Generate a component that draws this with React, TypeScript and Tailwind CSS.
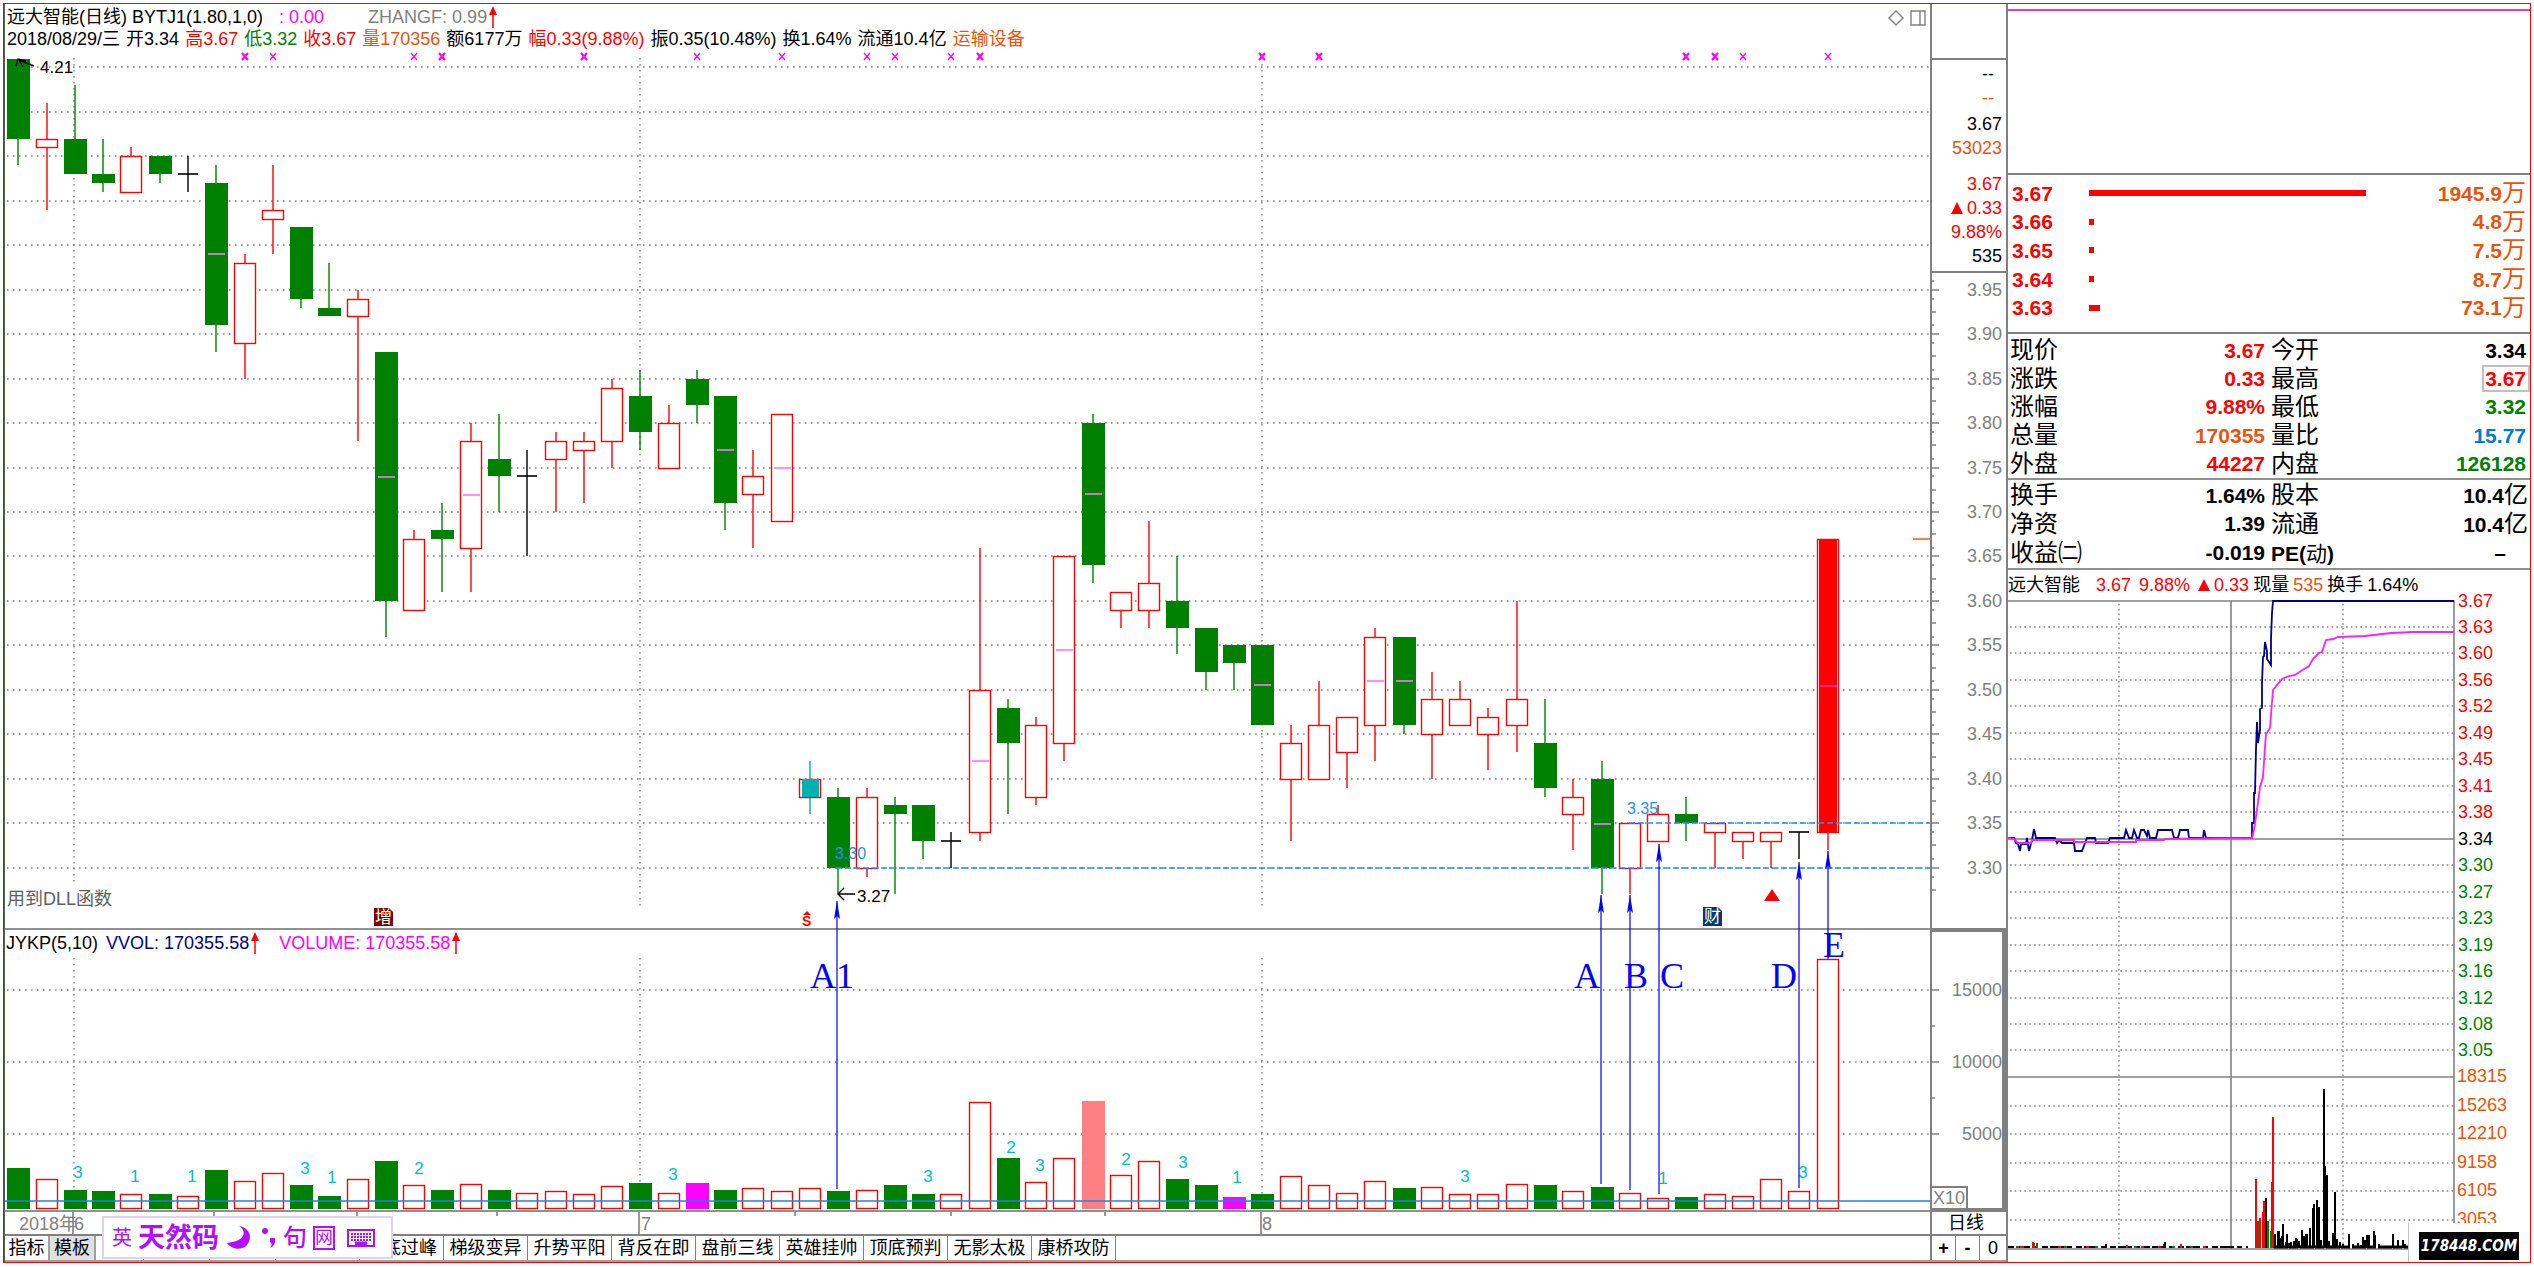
import { Fragment } from "react";

type Kind = "up" | "down" | "flat" | "gap" | "limit";
// kind, body top, body bottom, high, low, volume bar top (px), mid mark
type Candle = [Kind, number, number, number, number, number, boolean?];

const CANDLES: Candle[] = [
    ["down", 4.21, 4.12, 4.21, 4.09, 1168],
    ["up", 4.12, 4.11, 4.16, 4.04, 1179],
    ["down", 4.12, 4.08, 4.18, 4.08, 1190],
    ["down", 4.08, 4.07, 4.12, 4.06, 1191],
    ["up", 4.1, 4.06, 4.11, 4.06, 1194],
    ["down", 4.1, 4.08, 4.1, 4.07, 1194],
    ["flat", 4.08, 4.08, 4.1, 4.06, 1196],
    ["down", 4.07, 3.91, 4.09, 3.88, 1170, true],
    ["up", 3.98, 3.89, 3.99, 3.85, 1181],
    ["up", 4.04, 4.03, 4.09, 3.99, 1173],
    ["down", 4.02, 3.94, 4.02, 3.93, 1185],
    ["down", 3.93, 3.92, 3.98, 3.92, 1196],
    ["up", 3.94, 3.92, 3.95, 3.78, 1179],
    ["down", 3.88, 3.6, 3.88, 3.56, 1161, true],
    ["up", 3.67, 3.59, 3.68, 3.59, 1185],
    ["down", 3.68, 3.67, 3.71, 3.61, 1190],
    ["up", 3.78, 3.66, 3.8, 3.61, 1184, true],
    ["down", 3.76, 3.74, 3.81, 3.7, 1190],
    ["flat", 3.74, 3.74, 3.77, 3.65, 1193],
    ["up", 3.78, 3.76, 3.79, 3.7, 1191],
    ["up", 3.78, 3.77, 3.79, 3.71, 1194],
    ["up", 3.84, 3.78, 3.85, 3.75, 1186],
    ["down", 3.83, 3.79, 3.86, 3.77, 1183],
    ["up", 3.8, 3.75, 3.82, 3.75, 1193],
    ["down", 3.85, 3.82, 3.86, 3.8, 1183],
    ["down", 3.83, 3.71, 3.83, 3.68, 1190, true],
    ["up", 3.74, 3.72, 3.77, 3.66, 1188],
    ["up", 3.81, 3.69, 3.81, 3.69, 1191, true],
    ["gap", 3.4, 3.38, 3.42, 3.36, 1188],
    ["down", 3.38, 3.3, 3.39, 3.27, 1191],
    ["up", 3.38, 3.3, 3.39, 3.29, 1190],
    ["down", 3.37, 3.36, 3.38, 3.27, 1185],
    ["down", 3.37, 3.33, 3.37, 3.31, 1194],
    ["flat", 3.33, 3.33, 3.34, 3.3, 1194],
    ["up", 3.5, 3.34, 3.66, 3.33, 1102, true],
    ["down", 3.48, 3.44, 3.49, 3.36, 1158],
    ["up", 3.46, 3.38, 3.47, 3.37, 1182],
    ["up", 3.65, 3.44, 3.65, 3.42, 1158, true],
    ["down", 3.8, 3.64, 3.81, 3.62, 1101, true],
    ["up", 3.61, 3.59, 3.61, 3.57, 1175],
    ["up", 3.62, 3.59, 3.69, 3.57, 1161],
    ["down", 3.6, 3.57, 3.65, 3.54, 1179],
    ["down", 3.57, 3.52, 3.57, 3.5, 1185],
    ["down", 3.55, 3.53, 3.55, 3.5, 1197],
    ["down", 3.55, 3.46, 3.55, 3.46, 1194, true],
    ["up", 3.44, 3.4, 3.46, 3.33, 1176],
    ["up", 3.46, 3.4, 3.51, 3.4, 1185],
    ["up", 3.47, 3.43, 3.47, 3.39, 1193],
    ["up", 3.56, 3.46, 3.57, 3.42, 1181, true],
    ["down", 3.56, 3.46, 3.56, 3.45, 1188, true],
    ["up", 3.49, 3.45, 3.52, 3.4, 1187],
    ["up", 3.49, 3.46, 3.51, 3.46, 1194],
    ["up", 3.47, 3.45, 3.48, 3.41, 1194],
    ["up", 3.49, 3.46, 3.6, 3.43, 1184],
    ["down", 3.44, 3.39, 3.49, 3.38, 1185],
    ["up", 3.38, 3.36, 3.4, 3.32, 1191],
    ["down", 3.4, 3.3, 3.42, 3.27, 1187, true],
    ["up", 3.35, 3.3, 3.35, 3.27, 1193],
    ["up", 3.36, 3.33, 3.37, 3.33, 1198],
    ["down", 3.36, 3.35, 3.38, 3.33, 1197],
    ["up", 3.35, 3.34, 3.35, 3.3, 1194],
    ["up", 3.34, 3.33, 3.34, 3.31, 1196],
    ["up", 3.34, 3.33, 3.34, 3.3, 1179],
    ["flat", 3.34, 3.34, 3.34, 3.31, 1191],
    ["limit", 3.67, 3.34, 3.67, 3.32, 959, true],
];

const VOLUME_FILL: Record<number, string> = { 24: "#ff00ff", 38: "#ff8080", 43: "#ff00ff" };

const VOLUME_NOTES: [number, number, string][] = [
    [78, 1172, "3"], [135, 1176, "1"], [192, 1176, "1"], [305, 1168, "3"], [332, 1177, "1"],
    [419, 1168, "2"], [673, 1174, "3"], [928, 1176, "3"], [1011, 1147, "2"], [1040, 1165, "3"],
    [1126, 1159, "2"], [1183, 1162, "3"], [1237, 1177, "1"], [1465, 1176, "3"], [1663, 1178, "1"],
    [1803, 1172, "3"],
];

const CROSSES = [8, 9, 14, 15, 20, 24, 27, 30, 31, 33, 34, 44, 46, 59, 60, 61, 64];
const BOLD_CROSSES = [8, 15, 20, 34, 44, 46, 59, 60];
const MONTHS = [74, 640, 1262];

const priceY = (p: number) => Math.round(867.7 - (p - 3.3) * 889.2);
const candleX = (i: number) => Math.round(18.4 + i * 28.27);

const priceLines = Array.from({ length: 19 }, (_, i) => 3.3 + i * 0.05);

const INFO = [
    ["2018/08/29/三", "text-black"],
    ["开3.34", "text-black"],
    ["高3.67", "text-[#ff0000]"],
    ["低3.32", "text-[#008000]"],
    ["收3.67", "text-[#ff0000]"],
    ["量170356", "text-[#e8540c]"],
    ["额6177万", "text-black"],
    ["幅0.33(9.88%)", "text-[#ff0000]"],
    ["振0.35(10.48%)", "text-black"],
    ["换1.64%", "text-black"],
    ["流通10.4亿", "text-black"],
    ["运输设备", "text-[#e8540c]"],
];

const TABS = ["梯级变异", "升势平阳", "背反在即", "盘前三线", "英雄挂帅", "顶底预判", "无影太极", "康桥攻防"];

const LEVELS = [
    { price: "3.67", amount: "1945.9", width: "w-[277px]" },
    { price: "3.66", amount: "4.8", width: "w-[5px]" },
    { price: "3.65", amount: "7.5", width: "w-[5px]" },
    { price: "3.64", amount: "8.7", width: "w-[5px]" },
    { price: "3.63", amount: "73.1", width: "w-[11px]" },
];

const QUOTE = [
    ["现价", "3.67", "text-[#ff0000]", "今开", "3.34", "text-black"],
    ["涨跌", "0.33", "text-[#ff0000]", "最高", "3.67", "text-[#ff0000]"],
    ["涨幅", "9.88%", "text-[#ff0000]", "最低", "3.32", "text-[#008000]"],
    ["总量", "170355", "text-[#e8540c]", "量比", "15.77", "text-[#0078d7]"],
    ["外盘", "44227", "text-[#ff0000]", "内盘", "126128", "text-[#008000]"],
];

const FUNDAMENTALS = [
    ["换手", "1.64%", "text-black", "股本", "10.4亿", "text-black"],
    ["净资", "1.39", "text-black", "流通", "10.4亿", "text-black"],
    ["收益㈡", "-0.019", "text-black", "PE(动)", "–", "text-black"],
];

const MINI_LABELS = [
    "3.67", "3.63", "3.60", "3.56", "3.52", "3.49", "3.45", "3.41", "3.38", "3.34",
    "3.30", "3.27", "3.23", "3.19", "3.16", "3.12", "3.08", "3.05",
];
const MINI_VOLUMES = ["18315", "15263", "12210", "9158", "6105", "3053"];

const MINI_PRICE =
    "0,238 6,238 8,243 10,244 12,251 13,244 18,244 19,238 21,251 24,240 26,229 28,238 47,238 49,243 51,240 54,243 66,243 67,251 74,251 77,243 79,238 87,238 88,243 100,243 102,238 116,238 118,230 121,238 124,238 126,230 129,238 131,238 133,230 136,230 139,236 140,230 142,238 148,238 150,230 164,230 166,238 170,238 172,230 180,230 181,238 195,238 196,230 198,238 244,238 244,223 246,223 246,193 247,193 248,149 249,122 250,143 252,130 252,109 254,108 254,83 255,57 256,56 257,42 259,51 259,59 263,65 263,39 264,13 265,1 446,1";
const MINI_AVERAGE =
    "0,238 6,239 10,243 23,243 24,240 66,240 66,242 128,242 128,240 156,240 157,239 244,238 246,230 249,210 252,187 255,177 257,147 258,134 262,128 264,102 265,90 274,79 281,76 287,75 293,71 301,66 305,59 311,53 314,52 318,40 325,39 330,37 357,36 383,33 406,32 446,32";

// x, height, colour
const MINI_BARS: [number, number, string][] = [
    [24, 6, "#ff0000"], [25, 5, "#ff0000"], [28, 5, "#008000"], [97, 4, "#000"], [118, 3, "#ff0000"],
    [155, 4, "#000"], [156, 6, "#000"], [172, 4, "#ff0000"], [247, 69, "#ff0000"],
    [248, 27, "#ff0000"], [249, 27, "#804000"], [250, 27, "#804000"], [251, 30, "#ff0000"],
    [254, 36, "#ff0000"], [255, 47, "#ff0000"], [256, 47, "#ff0000"], [257, 50, "#000"],
    [259, 27, "#008000"], [262, 17, "#008000"], [263, 66, "#ff0000"], [264, 131, "#ff0000"],
    [266, 14, "#000"], [269, 17, "#000"], [270, 17, "#000"], [272, 10, "#000"], [273, 12, "#000"],
    [274, 24, "#000"], [277, 6, "#000"], [278, 14, "#000"], [280, 5, "#000"], [282, 6, "#000"],
    [285, 7, "#000"], [287, 10, "#000"], [288, 9, "#000"], [290, 7, "#000"], [293, 18, "#000"],
    [295, 12, "#000"], [297, 14, "#000"], [298, 14, "#000"], [301, 20, "#000"], [304, 40, "#000"],
    [305, 44, "#000"], [308, 48, "#000"], [310, 41, "#000"], [312, 8, "#000"], [315, 159, "#000"],
    [316, 82, "#000"], [318, 73, "#000"], [320, 7, "#000"], [324, 15, "#000"], [326, 56, "#000"],
    [328, 9, "#000"], [331, 6, "#000"], [334, 4, "#000"], [340, 14, "#000"], [344, 4, "#000"],
    [349, 5, "#000"], [352, 3, "#000"], [354, 11, "#000"], [356, 8, "#000"], [358, 13, "#000"],
    [360, 13, "#000"], [365, 17, "#000"], [366, 13, "#000"], [370, 4, "#000"], [384, 14, "#000"],
    [389, 8, "#000"], [394, 8, "#000"], [396, 4, "#000"],
];

const POINTERS = [
    { x: 837, top: 901, bottom: 1189, label: "A1", lx: 810, ly: 988 },
    { x: 1601, top: 895, bottom: 1184, label: "A", lx: 1574, ly: 988 },
    { x: 1630, top: 895, bottom: 1190, label: "B", lx: 1624, ly: 988 },
    { x: 1659, top: 844, bottom: 1194, label: "C", lx: 1660, ly: 988 },
    { x: 1799, top: 862, bottom: 1188, label: "D", lx: 1771, ly: 988 },
    { x: 1828, top: 851, bottom: 959, label: "E", lx: 1823, ly: 957 },
];

function CandleShape({ candle, index }: { candle: Candle; index: number }) {
    const [kind, top, bottom, high, low, , mid] = candle;
    const x = candleX(index);
    const yt = priceY(top);
    const yb = priceY(bottom);
    const yh = priceY(high);
    const yl = priceY(low);
    const color = kind === "down" ? "#008000" : kind === "flat" ? "#000000" : kind === "gap" ? "#00b0b0" : "#ff0000";

    return (
        <g>
            <path d={`M${x} ${yh}V${yt}M${x} ${yb}V${yl}`} stroke={color} strokeWidth="1.4" />
            {kind === "flat" && <path d={`M${x - 10} ${yt}H${x + 10}`} stroke={color} strokeWidth="1.6" />}
            {kind === "down" && <rect x={x - 11} y={yt} width="23" height={yb - yt} fill={color} />}
            {kind !== "down" && kind !== "flat" && (
                <rect x={x - 10.5} y={yt + 0.5} width="21" height={yb - yt} fill="#fff" stroke="#ff0000" strokeWidth="1.4" />
            )}
            {kind === "limit" && <rect x={x - 9} y={yt} width="18" height={yb - yt} fill="#ff0000" />}
            {kind === "gap" && <rect x={x - 8} y={yt} width="17" height={yb - yt} fill="#00b0b0" />}
            {mid && (
                <path
                    d={`M${x - 8} ${Math.round((yt + yb) / 2)}h17`}
                    stroke={kind === "down" ? "#c080c0" : kind === "limit" ? "#ff2090" : "#ff90ff"}
                    strokeWidth="2"
                />
            )}
        </g>
    );
}

function PriceChart() {
    return (
        <svg className="block h-full w-full overflow-visible" viewBox="5 50 1925 878" preserveAspectRatio="none">
            <g stroke="#808080" strokeWidth="1.4" strokeDasharray="1.6 4.4">
                {priceLines.map((p) => (
                    <path key={p} d={`M7 ${priceY(p)}H1930`} />
                ))}
                {MONTHS.map((x) => (
                    <path key={x} d={`M${x} 58V${x === 74 ? 884 : 906}`} />
                ))}
            </g>
            {CROSSES.map((i) => (
                <path
                    key={i}
                    d={`M${candleX(i) - 3} 53l6 7m0 -7l-6 7`}
                    stroke="#ff00ff"
                    strokeWidth={BOLD_CROSSES.includes(i) ? 2.2 : 1.3}
                />
            ))}
            {CANDLES.map((c, i) => (
                <CandleShape key={i} candle={c} index={i} />
            ))}
            <g stroke="#1e90ff" strokeWidth="1.6" strokeDasharray="6 3">
                <path d="M836 868H1930" />
                <path d="M1629 823H1930" />
            </g>
            <path d="M1913 539H1930" stroke="#f08050" strokeWidth="2" />
            <g fill="#1e90ff" fontSize="16">
                <text x="835" y="859">3.30</text>
                <text x="1627" y="814">3.35</text>
            </g>
            <path d="M34 66L19 60M16 66L18 59L26 61M23 67L19 60" stroke="#000" strokeWidth="1.4" fill="none" />
            <path d="M855 894H838M844 888L838 894L844 900" stroke="#000" strokeWidth="1.4" fill="none" />
            <g fontSize="17">
                <text x="40" y="73">4.21</text>
                <text x="857" y="902">3.27</text>
            </g>
            <text x="7" y="905" fontSize="18" fill="#606060">用到DLL函数</text>
            <path d="M374 908h15l4 4v14h-19z" fill="#800000" />
            <text x="375" y="923" fontSize="17" fill="#fff">增</text>
            <path d="M1703 907h15l4 4v15h-19z" fill="#003a70" />
            <text x="1704" y="922" fontSize="17" fill="#fff">财</text>
            <path d="M807 911l4 4h-8z" fill="#ff0000" />
            <text x="802" y="926" fontSize="14" fontWeight="bold" fill="#ff0000">S</text>
            <path d="M1772 889l8 12h-16z" fill="#ff0000" />
        </svg>
    );
}

function VolumeChart() {
    return (
        <svg className="block h-full w-full" viewBox="5 956 1925 254" preserveAspectRatio="none">
            <g stroke="#808080" strokeWidth="1.4" strokeDasharray="1.6 4.4">
                {[990, 1062, 1134].map((y) => (
                    <path key={y} d={`M7 ${y}H1930`} />
                ))}
                {MONTHS.map((x) => (
                    <path key={x} d={`M${x} 958V1208`} />
                ))}
            </g>
            {CANDLES.map((c, i) => {
                const x = candleX(i);
                const fill = VOLUME_FILL[i] ?? (c[0] === "down" ? "#008000" : null);
                return fill ? (
                    <rect key={i} x={x - 11} y={c[5]} width="23" height={1209 - c[5]} fill={fill} />
                ) : (
                    <rect key={i} x={x - 10.5} y={c[5] + 0.5} width="21" height={1208 - c[5]} fill="#fff" stroke="#ff0000" strokeWidth="1.4" />
                );
            })}
            <path d="M5 1201H1930" stroke="#1e80e8" strokeWidth="1.6" />
            <g fill="#00c0c0" fontSize="17" textAnchor="middle">
                {VOLUME_NOTES.map(([x, y, n]) => (
                    <text key={x} x={x} y={y + 6}>{n}</text>
                ))}
            </g>
        </svg>
    );
}

function Pointers() {
    return (
        <svg
            className="pointer-events-none absolute inset-0 h-full w-full"
            viewBox="5 4 1925 1208"
            preserveAspectRatio="none"
        >
            {POINTERS.map((p) => (
                <Fragment key={p.label}>
                    <path d={`M${p.x} ${p.top}V${p.bottom}`} stroke="#0000ff" strokeWidth="1.2" />
                    <path d={`M${p.x} ${p.top}l3 18l-3 -3l-3 3z`} fill="#0000ff" />
                    <text x={p.lx} y={p.ly} fontSize="36" fill="#0000ff" className="font-['Liberation_Serif',serif]">
                        {p.label}
                    </text>
                </Fragment>
            ))}
        </svg>
    );
}

function UpArrow() {
    return (
        <svg className="ml-0.5 h-[22px] w-2 shrink-0" viewBox="0 0 8 22">
            <path d="M4 2V22" stroke="#ff0000" strokeWidth="1.5" />
            <path d="M4 0l4 9H0z" fill="#ff0000" />
        </svg>
    );
}

function PriceAxis() {
    const labels = priceLines.filter((p) => p < 3.96);
    return (
        <svg className="block h-full w-full" viewBox="1932 273 74 655" preserveAspectRatio="none">
            {labels.map((p) => (
                <g key={p}>
                    <path
                        d={`M1932 ${priceY(p)}h7M1932 ${priceY(p + 0.01)}h2M1932 ${priceY(p - 0.01)}h2M1932 ${priceY(p - 0.025)}h4`}
                        stroke="#808080"
                        strokeWidth="1.6"
                    />
                    <text x="2002" y={priceY(p) + 6} fontSize="18" fill="#808080" textAnchor="end">
                        {p.toFixed(2)}
                    </text>
                </g>
            ))}
        </svg>
    );
}

function VolumeAxis() {
    return (
        <svg className="block h-full w-full" viewBox="1932 932 70 276" preserveAspectRatio="none">
            <path d="M1932 990h7M1932 1062h7M1932 1134h7M1932 1026h3M1932 1098h3" stroke="#808080" strokeWidth="1.6" />
            <g fontSize="18" fill="#808080" textAnchor="end">
                <text x="2002" y="996">15000</text>
                <text x="2002" y="1068">10000</text>
                <text x="2002" y="1140">5000</text>
            </g>
            <path d="M1932 1187h35v22" fill="none" stroke="#808080" strokeWidth="2" />
            <text x="1933" y="1204" fontSize="18" fill="#808080">X10</text>
        </svg>
    );
}

function QuoteTable({ rows, height }: { rows: string[][]; height: string }) {
    return (
        <table className={`w-full table-fixed border-collapse text-[21px] leading-none font-bold whitespace-nowrap ${height}`}>
            <colgroup>
                <col className="w-20" />
                <col className="w-[183px]" />
                <col className="w-20" />
                <col />
            </colgroup>
            <tbody>
                {rows.map(([a, av, ac, b, bv, bc]) => (
                    <tr key={a}>
                        <th className="p-0 pl-0.5 text-left text-2xl leading-none font-normal">{a}</th>
                        <td className={`p-0 pr-1.5 text-right ${ac}`}>{av}</td>
                        <th className="p-0 text-left text-2xl leading-none font-normal">
                            {b === "PE(动)" ? (
                                <span className="text-[21px] font-bold">PE(<span className="font-normal">动</span>)</span>
                            ) : b}
                        </th>
                        <td className={`p-0 text-right ${bc} ${bv === "–" ? "pr-6" : bv.endsWith("亿") ? "pr-0.5" : "pr-1"}`}>
                            {b === "最高" ? (
                                <span className="-mr-1 border-2 border-[#c0c0c0] pr-0.5 pl-px">{bv}</span>
                            ) : bv.endsWith("亿") ? (
                                <>{bv.slice(0, -1)}<span className="text-2xl leading-none font-normal">亿</span></>
                            ) : bv}
                        </td>
                    </tr>
                ))}
            </tbody>
        </table>
    );
}

function MiniChart() {
    const rowY = (i: number) => Math.round(600.5 + i * 26.47);
    const volY = (i: number) => Math.round(1077 + i * 28.5);
    return (
        <svg className="block h-full w-full overflow-visible" viewBox="2008 600 522 662" preserveAspectRatio="none">
            <g stroke="#808080" strokeWidth="1.4" strokeDasharray="1.6 3.2">
                {MINI_LABELS.map((l, i) => i !== 0 && i !== 9 && <path key={l} d={`M2010 ${rowY(i)}H2453`} />)}
                {MINI_VOLUMES.map((l, i) => i !== 0 && <path key={l} d={`M2010 ${volY(i)}H2453`} />)}
                <path d="M2119 604V1248M2343 604V1248" />
            </g>
            <path d="M2008 601H2454V1249H2008M2008 839H2454M2008 1077H2454M2231 601V1249" fill="none" stroke="#808080" strokeWidth="1.6" />
            <g transform="translate(2008 600)" fill="none">
                <polyline points={MINI_PRICE} stroke="#000080" strokeWidth="1.8" />
                <polyline points={MINI_AVERAGE} stroke="#ff20ff" strokeWidth="1.8" />
                <path d="M0 647H240" stroke="#000" strokeWidth="2" strokeDasharray="6 2 14 3 5 4" />
                <path d="M12 647h4M50 647h3M78 647h3M133 647h3M150 647h3M195 647h3" stroke="#ff0000" strokeWidth="2" />
                <path d="M8 647h3M56 647h3M87 647h3M126 647h3M164 647h3M182 647h3" stroke="#008000" strokeWidth="2" />
                <path d="M266 647H400" stroke="#000" strokeWidth="3" strokeDasharray="14 1 9 2" />
                {MINI_BARS.map(([x, h, c]) => (
                    <rect key={x} x={x} y={648 - h} width="2" height={h} fill={c} />
                ))}
            </g>
            <g fontSize="18">
                {MINI_LABELS.map((l, i) => (
                    <text key={l} x="2458" y={rowY(i) + 6} fill={i < 9 ? "#ff0000" : i === 9 ? "#000" : "#008000"}>{l}</text>
                ))}
                {MINI_VOLUMES.map((l, i) => (
                    <text key={l} x="2457" y={Math.round(1082 + i * 28.5)} fill="#e8540c">{l}</text>
                ))}
            </g>
        </svg>
    );
}

function InputBar() {
    return (
        <div className="absolute bottom-2 left-[102px] flex h-[43px] w-[291px] items-center border-2 border-[#e0d0f4] bg-white pl-2 text-[#b010ff]">
            <span className="text-xl">英</span>
            <span className="ml-1.5 text-[27px] font-bold">天然码</span>
            <svg className="ml-2 h-6 w-6" viewBox="0 0 24 24">
                <path d="M12 0c8 5 7 15-12 17c5 8 22 9 23-6c0-6-5-10-11-11z" fill="currentColor" />
            </svg>
            <svg className="ml-2.5 h-6 w-4" viewBox="0 0 16 24">
                <circle cx="4" cy="5" r="3" fill="currentColor" />
                <path d="M9 12h5c1 5-1 8-5 10c2-3 2-5 0-6z" fill="currentColor" />
            </svg>
            <span className="ml-1.5 text-2xl font-medium">句</span>
            <span className="ml-1.5 border-2 border-[#b010ff] text-lg leading-5">网</span>
            <svg className="ml-3 h-[18px] w-7" viewBox="0 0 28 18">
                <rect x="1" y="1" width="26" height="16" fill="none" stroke="currentColor" strokeWidth="2" />
                <path d="M4 5h20M4 8h20M4 11h20" stroke="currentColor" strokeWidth="2" strokeDasharray="2 1" />
                <path d="M8 14.500h12" stroke="currentColor" strokeWidth="4" />
            </svg>
        </div>
    );
}

export default function App() {
    return (
        <div className="relative h-screen min-h-[700px] w-full bg-white px-[3px] pt-[3px] pb-1 font-['Liberation_Sans','Noto_Sans_CJK_SC',sans-serif] text-lg leading-[22px] text-black">
            <div className="flex h-full border border-[#ff0000]">
                <section className="flex min-w-0 flex-1 flex-col border-l border-[#506050]">
                    <div className="flex min-h-0 flex-1">
                        <div className="relative flex min-w-0 flex-1 flex-col">
                            <header className="flex h-[46px] items-start justify-between overflow-hidden whitespace-nowrap">
                                <div className="pt-0.5 pl-0.5">
                                    <div className="flex">
                                        <h1>远大智能(日线) BYTJ1(1.80,1,0)</h1>
                                        <span className="ml-4 text-[#ff00ff]">: 0.00</span>
                                        <span className="ml-11 text-[#808080]">ZHANGF: 0.99</span>
                                        <UpArrow />
                                    </div>
                                    <div className="flex gap-1.5">
                                        {INFO.map(([text, color]) => (
                                            <span key={text} className={color}>{text}</span>
                                        ))}
                                    </div>
                                </div>
                                <div className="flex gap-1.5 pt-1.5 pr-1">
                                    <button aria-label="标记">
                                        <svg className="h-4 w-4" viewBox="0 0 16 16">
                                            <path d="M8 1l7 7l-7 7l-7 -7z" fill="none" stroke="#808080" strokeWidth="1.4" />
                                        </svg>
                                    </button>
                                    <button aria-label="分栏">
                                        <svg className="h-4 w-4" viewBox="0 0 16 16">
                                            <path d="M1 1h14v14H1zM10 1v14" fill="none" stroke="#808080" strokeWidth="1.4" />
                                        </svg>
                                    </button>
                                </div>
                            </header>
                            <div className="min-h-0 flex-1">
                                <PriceChart />
                            </div>
                            <div className="flex h-[284px] flex-col border-y-2 border-y-[#909090]">
                                <div className="flex h-[26px] items-center overflow-hidden pl-px whitespace-nowrap">
                                    <span>JYKP(5,10)</span>
                                    <span className="ml-2 text-[#000080]">VVOL: 170355.58</span>
                                    <UpArrow />
                                    <span className="ml-5 text-[#ff00ff]">VOLUME: 170355.58</span>
                                    <UpArrow />
                                </div>
                                <div className="min-h-0 flex-1">
                                    <VolumeChart />
                                </div>
                            </div>
                            <Pointers />
                        </div>
                        <aside className="flex w-[76px] shrink-0 flex-col border-l-2 border-[#808080]">
                            <div className="h-[56px] border-b-2 border-[#808080]"></div>
                            <div className="flex h-[213px] flex-col border-b-2 border-[#808080] pt-0.5 pr-1 text-right leading-6">
                                <span className="pr-2">--</span>
                                <span className="pr-2 text-[#e8540c]">--</span>
                                <span className="pt-0.5">3.67</span>
                                <span className="text-[#e8540c]">53023</span>
                                <span className="pt-3 text-[#ff0000]">3.67</span>
                                <span className="flex items-center justify-end gap-1 text-[#ff0000]">
                                    <svg className="h-3 w-3" viewBox="0 0 12 12"><path d="M6 0l6 12H0z" fill="currentColor" /></svg>
                                    0.33
                                </span>
                                <span className="text-[#ff0000]">9.88%</span>
                                <span>535</span>
                            </div>
                            <div className="min-h-0 flex-1">
                                <PriceAxis />
                            </div>
                            <div className="h-[284px] border-y-4 border-r-4 border-[#808080]">
                                <VolumeAxis />
                            </div>
                        </aside>
                    </div>
                    <div className="flex h-6 border-b-2 border-[#808080]">
                        <div className="min-w-0 flex-1">
                            <svg className="block h-full w-full" viewBox="5 1212 1925 22" preserveAspectRatio="none">
                                <path d="M73 1212v22M639 1212v22M1261 1212v22M214 1212v4M357 1212v4M497 1212v4M795 1212v4M951 1212v4M1105 1212v4" stroke="#808080" strokeWidth="1.6" />
                                <g fontSize="18" fill="#808080">
                                    <text x="19" y="1230">2018年</text>
                                    <text x="74" y="1230">6</text>
                                    <text x="641" y="1230">7</text>
                                    <text x="1262" y="1230">8</text>
                                </g>
                            </svg>
                        </div>
                        <div className="w-[76px] border-l-2 border-[#808080] pl-4">日线</div>
                    </div>
                    <nav className="flex h-[26px] border-b-2 border-[#a0a0a0] whitespace-nowrap">
                        <button className="w-[45px] border-r-2 border-[#a0a0a0]">指标</button>
                        <button className="w-[46px] border-r-2 border-[#a0a0a0] bg-[#e0e0e0]">模板</button>
                        <span className="w-12 border-r border-[#808080]"></span>
                        <span className="w-[66px] border-r border-[#808080]"></span>
                        <span className="w-[66px] border-r border-[#808080]"></span>
                        <span className="w-[84px] border-r border-[#808080]"></span>
                        <button className="w-[84px] border-r border-[#808080] pr-1.5 text-right">底过峰</button>
                        {TABS.map((tab) => (
                            <button key={tab} className="w-[84px] border-r border-[#808080]">{tab}</button>
                        ))}
                        <div className="ml-auto flex w-[76px] border-l-2 border-[#808080]">
                            <button className="w-6 border-r border-[#808080] font-bold">+</button>
                            <button className="w-6 border-r border-[#808080] font-bold">-</button>
                            <button className="flex-1">0</button>
                        </div>
                    </nav>
                </section>
                <section className="flex w-[524px] shrink-0 flex-col border-l-2 border-[#808080]">
                    <div className="h-[171px] border-b-2 border-[#808080] pt-[5px]">
                        <div className="h-0.5 bg-[#ff3399]"></div>
                    </div>
                    <ul className="flex h-[159px] flex-col border-b-2 border-[#808080] pt-1 pr-1 pb-2.5 pl-1 text-[21px] leading-none font-bold">
                        {LEVELS.map((l) => (
                            <li key={l.price} className="flex flex-1 items-center">
                                <span className="w-[77px] text-[#ff0000]">{l.price}</span>
                                <span className={`h-1.5 bg-[#ff0000] ${l.width}`}></span>
                                <span className="ml-auto flex items-center text-[#e8540c]">
                                    {l.amount}<span className="text-2xl leading-none font-normal">万</span>
                                </span>
                            </li>
                        ))}
                    </ul>
                    <div className="h-[146px] border-b-2 border-[#909090] pt-0.5">
                        <QuoteTable rows={QUOTE} height="h-[142px]" />
                    </div>
                    <div className="h-[90px] border-b-2 border-[#909090] pt-px">
                        <QuoteTable rows={FUNDAMENTALS} height="h-[86px]" />
                    </div>
                    <div className="flex h-[30px] items-center whitespace-nowrap">
                        <span>远大智能</span>
                        <span className="ml-4 text-[#ff0000]">3.67</span>
                        <span className="ml-2 text-[#ff0000]">9.88%</span>
                        <svg className="ml-2 h-3 w-3 text-[#ff0000]" viewBox="0 0 12 12"><path d="M6 0l6 12H0z" fill="currentColor" /></svg>
                        <span className="ml-1 text-[#ff0000]">0.33</span>
                        <span className="ml-1">现量</span>
                        <span className="ml-1 text-[#e8540c]">535</span>
                        <span className="ml-1">换手</span>
                        <span className="ml-1">1.64%</span>
                    </div>
                    <div className="min-h-0 flex-1">
                        <MiniChart />
                    </div>
                </section>
            </div>
            <InputBar />
            <div className="absolute right-[5px] bottom-[5px] flex h-[39px] w-[121px] items-center justify-center border-l border-[#c0c0c0] bg-white pt-1.5">
                <span className="bg-black px-0.5 font-['Liberation_Sans_Narrow','DejaVu_Sans_Condensed',sans-serif] text-[15px] leading-7 font-bold text-white italic">
                    178448.COM
                </span>
            </div>
        </div>
    );
}
